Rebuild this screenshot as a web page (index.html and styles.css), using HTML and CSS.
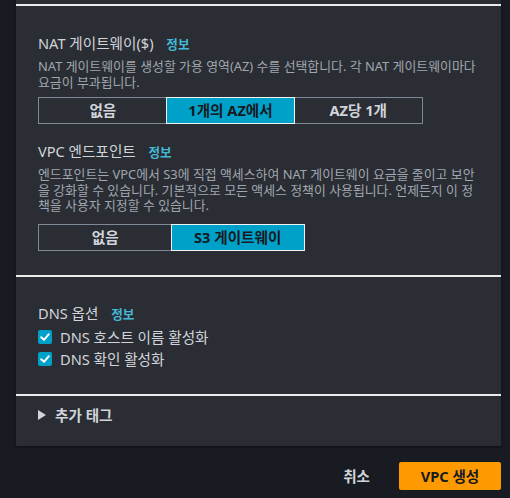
FILE: index.html
```html
<!DOCTYPE html>
<html lang="ko">
<head>
<meta charset="utf-8">
<link rel="stylesheet" href="styles.css">
</head>
<body>
<div class="panel">
  <div class="top-gap"></div>
  <section class="section first">
    <div class="field">
      <div class="label">NAT 게이트웨이($) <a class="info">정보</a></div>
      <p class="desc">NAT 게이트웨이를 생성할 가용 영역(AZ) 수를 선택합니다. 각 NAT 게이트웨이마다 요금이 부과됩니다.</p>
      <div class="seg seg-nat">
        <button class="seg-btn">없음</button>
        <button class="seg-btn active">1개의 AZ에서</button>
        <button class="seg-btn">AZ당 1개</button>
      </div>
    </div>
    <div class="field field2">
      <div class="label">VPC 엔드포인트 <a class="info">정보</a></div>
      <p class="desc">엔드포인트는 VPC에서 S3에 직접 액세스하여 NAT 게이트웨이 요금을 줄이고 보안을 강화할 수 있습니다. 기본적으로 모든 액세스 정책이 사용됩니다. 언제든지 이 정책을 사용자 지정할 수 있습니다.</p>
      <div class="seg seg-vpc">
        <button class="seg-btn">없음</button>
        <button class="seg-btn active">S3 게이트웨이</button>
      </div>
    </div>
  </section>
  <section class="section dns">
    <div class="label">DNS 옵션 <a class="info">정보</a></div>
    <label class="check"><span class="box"><svg viewBox="0 0 14 14" width="14" height="14"><path d="M3.2 7.2 L6 9.8 L10.8 4.2" fill="none" stroke="#fff" stroke-width="2" stroke-linecap="round" stroke-linejoin="round"/></svg></span>DNS 호스트 이름 활성화</label>
    <label class="check"><span class="box"><svg viewBox="0 0 14 14" width="14" height="14"><path d="M3.2 7.2 L6 9.8 L10.8 4.2" fill="none" stroke="#fff" stroke-width="2" stroke-linecap="round" stroke-linejoin="round"/></svg></span>DNS 확인 활성화</label>
  </section>
  <section class="section tags">
    <div class="expander"><svg class="caret" viewBox="0 0 8 10" width="8" height="10"><path d="M0 0 L8 5 L0 10 Z" fill="#d1d5db"/></svg>추가 태그</div>
  </section>
</div>
<div class="actions">
  <button class="cancel">취소</button>
  <button class="primary">VPC 생성</button>
</div>
</body>
</html>
```
FILE: styles.css
```css
* { box-sizing: border-box; }
html, body { margin: 0; padding: 0; }
body {
  background: #181b22;
  font-family: "Noto Sans", "Noto Sans CJK KR", sans-serif;
  color: #d1d5db;
  width: 510px;
  height: 498px;
  overflow: hidden;
}
.panel {
  margin-left: 16px;
  width: 485px;
  background: #2a2d33;
  box-shadow: 0 1px 2px rgba(0,0,0,0.5);
}
.top-gap { height: 4px; }
.section {
  border-top: 2px solid #e9ebed;
  padding: 0 20px 0 22px;
}
.first { padding-top: 26px; padding-bottom: 24px; }
.label {
  font-size: 14.6px;
  line-height: 22px;
  color: #d1d5db;
}
.info {
  color: #44b9d6;
  font-weight: 700;
  font-size: 12.6px;
  margin-left: 9px;
}
.desc {
  margin: 3px 0 7px;
  font-size: 12.9px;
  line-height: 15.5px;
  color: #a0a7b0;
}
.field2 .desc { margin-bottom: 10px; }
.seg {
  display: flex;
  border: 1px solid #7f8896;
  height: 27px;
}
.seg-nat { width: 385px; }
.seg-vpc { width: 267px; }
.seg-btn {
  flex: 1;
  background: transparent;
  border: 0;
  font: 700 14.6px/25px "Noto Sans", "Noto Sans CJK KR", sans-serif;
  color: #d1d5db;
  padding: 0;
}
.seg-btn.active {
  background: #00a1c9;
  color: #16191f;
  outline: 1px solid #f2f3f3;
  outline-offset: 0;
}
.field2 { margin-top: 16px; }
.dns { padding-top: 25px; padding-bottom: 24px; }
.check {
  display: flex;
  align-items: center;
  font-size: 14.6px;
  line-height: 22px;
  color: #d1d5db;
}
.box {
  width: 14px;
  height: 14px;
  background: #00a1c9;
  border-radius: 2px;
  margin-right: 8px;
  display: flex;
}
.tags { padding-top: 8px; padding-bottom: 20px; }
.expander {
  display: flex;
  align-items: center;
  font-size: 14.6px;
  font-weight: 700;
  line-height: 22px;
}
.caret { margin-right: 9px; }
.actions {
  display: flex;
  justify-content: flex-end;
  align-items: center;
  gap: 29px;
  padding: 16px 9px 0 0;
}
.cancel {
  background: transparent;
  border: 0;
  color: #d1d5db;
  font: 700 14.6px "Noto Sans", "Noto Sans CJK KR", sans-serif;
  padding: 0;
}
.primary {
  background: #ff9900;
  border: 0;
  border-radius: 2px;
  width: 102px;
  height: 28px;
  color: #16191f;
  font: 700 14.6px "Noto Sans", "Noto Sans CJK KR", sans-serif;
}
```
